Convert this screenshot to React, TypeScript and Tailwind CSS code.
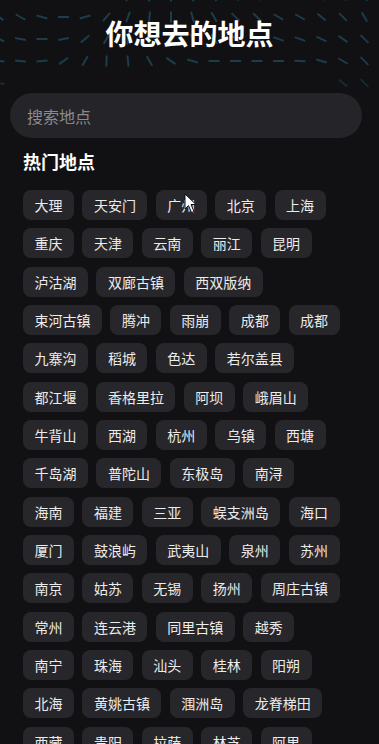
const places = [
  '大理', '天安门', '广州', '北京', '上海',
  '重庆', '天津', '云南', '丽江', '昆明',
  '泸沽湖', '双廊古镇', '西双版纳',
  '束河古镇', '腾冲', '雨崩', '成都', '成都',
  '九寨沟', '稻城', '色达', '若尔盖县',
  '都江堰', '香格里拉', '阿坝', '峨眉山',
  '牛背山', '西湖', '杭州', '乌镇', '西塘',
  '千岛湖', '普陀山', '东极岛', '南浔',
  '海南', '福建', '三亚', '蜈支洲岛', '海口',
  '厦门', '鼓浪屿', '武夷山', '泉州', '苏州',
  '南京', '姑苏', '无锡', '扬州', '周庄古镇',
  '常州', '连云港', '同里古镇', '越秀',
  '南宁', '珠海', '汕头', '桂林', '阳朔',
  '北海', '黄姚古镇', '涠洲岛', '龙脊梯田',
  '西藏', '贵阳', '拉萨', '林芝', '阿里',
]

// flow-field angles (deg) per row, 18 columns
const field: { y: number; a: (number | null)[] }[] = [
  { y: -4, a: [45, 40, 30, 15, -10, -45, -70, -85, 90, 80, 65, 55, 50, 45, 45, 50, 55, 60] },
  { y: 17, a: [35, 30, 15, 0, -15, -50, -70, -85, 90, 75, 60, 45, 45, 30, 30, 40, 45, 60] },
  { y: 39, a: [25, 10, 0, -10, -40, -60, -80, 90, 80, 70, 60, 45, 30, 20, 20, 25, 35, 45] },
  { y: 61, a: [5, 5, -5, -35, -60, -88, 85, 60, 35, 15, 0, 0, 0, 0, 3, 15, 30, 45] },
  { y: 83, a: [10, null, null, null, null, null, null, null, null, null, null, null, null, null, null, null, 40, 45] },
]

function FlowLines() {
  const lines: JSX.Element[] = []
  field.forEach((row, r) => {
    row.a.forEach((deg, i) => {
      if (deg === null) return
      const cx = -1 + i * 21.5
      const rad = (deg * Math.PI) / 180
      const dx = Math.cos(rad) * 5.5
      const dy = Math.sin(rad) * 5.5
      lines.push(
        <line
          key={r + '-' + i}
          x1={cx - dx}
          y1={row.y - dy}
          x2={cx + dx}
          y2={row.y + dy}
          stroke="#1b3d4c"
          strokeWidth="2"
          opacity={r === 4 ? 0.6 : 1}
        />
      )
    })
  })
  return (
    <svg className="absolute top-0 left-0 pointer-events-none" width="379" height="100" viewBox="0 0 379 100">
      {lines}
    </svg>
  )
}

export default function App() {
  return (
    <div
      className="relative h-[744px] w-full overflow-hidden bg-[#111113] text-white"
      style={{ fontFamily: '"Noto Sans CJK SC", "Noto Sans", sans-serif' }}
    >
      <FlowLines />

      <div className="relative flex h-[65px] items-center justify-center">
        <h1 className="text-[28px] font-bold leading-[34px]">你想去的地点</h1>
      </div>

      <div className="relative ml-[10px] mt-[28px] flex h-[45px] w-[352px] items-center rounded-full bg-[#252428] pl-[17px]">
        <span className="text-[16px] leading-[20px] text-[#8b8a8f]">搜索地点</span>
      </div>

      <h2 className="mt-[11px] pl-[23px] text-[18px] font-bold leading-[24px]">热门地点</h2>

      <div className="mt-[17px] flex flex-wrap gap-x-[8.4px] gap-y-[8.33px] pl-[23px] pr-[32px]">
        {places.map((p, i) => (
          <div
            key={i}
            className="flex h-[30px] items-center rounded-[8px] bg-[#27262a] px-[11.5px] text-[14px] leading-[20px] text-[#ececec]"
          >
            {p}
          </div>
        ))}
      </div>

      {/* mouse pointer captured in the shot */}
      <svg className="absolute left-[184px] top-[193px] pointer-events-none" width="14" height="21" viewBox="0 0 14 21">
        <path d="M1 1 L1 16 L4.5 12.5 L7.5 19.5 L10 18.5 L7 11.5 L12 11.5 Z" fill="#fff" stroke="#111" strokeWidth="1" strokeLinejoin="round" />
      </svg>
    </div>
  )
}
